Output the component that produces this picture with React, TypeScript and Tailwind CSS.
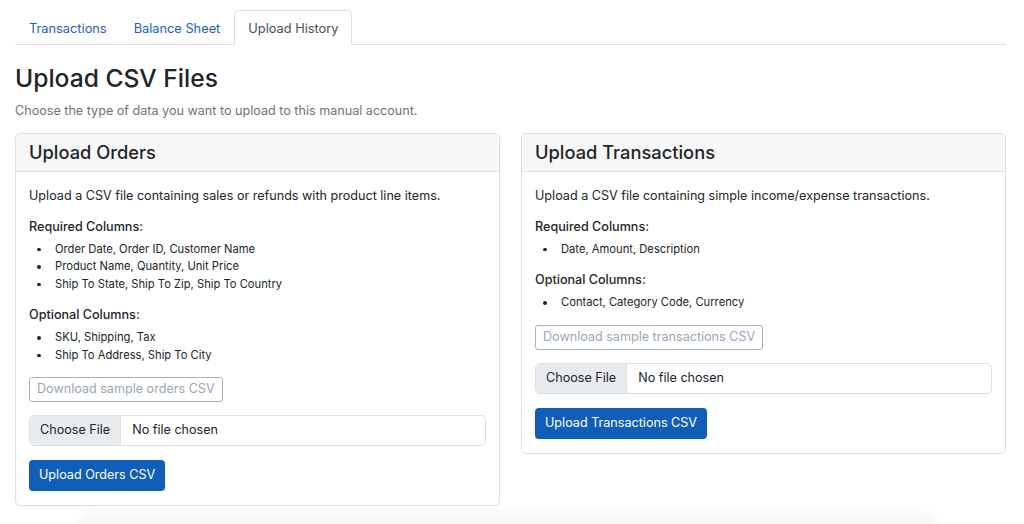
import React from 'react'

const tabs = ['Transactions', 'Balance Sheet', 'Upload History']

interface UploadCardProps {
  title: string
  description: string
  required: string[]
  optional: string[]
  sampleLabel: string
  uploadLabel: string
}

function ColumnList({ items }: { items: string[] }) {
  return (
    <ul className="mt-[6px] pl-[8px] text-[11.2px] text-[#212529] leading-[17.4px]">
      {items.map((r) => (
        <li key={r} className="flex items-center">
          <span className="w-[3.5px] h-[3.5px] rounded-full bg-[#212529] mr-[14.5px]" />
          {r}
        </li>
      ))}
    </ul>
  )
}

function UploadCard({ title, description, required, optional, sampleLabel, uploadLabel }: UploadCardProps) {
  return (
    <div className="rounded-[5px] border border-[#dcdfe3] bg-white">
      <div className="h-[38px] flex items-center px-[13px] bg-[#f7f7f7] border-b border-[#dcdfe3] rounded-t-[5px]">
        <h4 className="text-[18.3px] font-medium text-[#212529] leading-none">{title}</h4>
      </div>
      <div className="px-[13px] pt-[14px] pb-[14px]">
        <p className="text-[12.6px] text-[#212529] leading-[19px]">{description}</p>

        <h6 className="mt-[14px] text-[12.6px] font-medium text-[#212529] leading-[16px]">Required Columns:</h6>
        <ColumnList items={required} />

        <h6 className="mt-[14px] text-[12.6px] font-medium text-[#212529] leading-[16px]">Optional Columns:</h6>
        <ColumnList items={optional} />

        <button className="mt-[13px] h-[25px] px-[7px] rounded-[3px] border border-[#aab4c1] text-[12.6px] text-[#9aa6b4] leading-none">
          {sampleLabel}
        </button>

        <div className="mt-[13px] h-[31px] flex items-stretch rounded-[5px] border border-[#dcdfe3] overflow-hidden text-[12.6px] text-[#212529]">
          <span className="flex items-center px-[10px] bg-[#e9ecef] border-r border-[#dcdfe3]">Choose File</span>
          <span className="flex items-center px-[11px]">No file chosen</span>
        </div>

        <button className="mt-[14px] h-[31px] px-[10px] rounded-[4px] bg-[#115eb8] text-white text-[12.6px] leading-none">
          {uploadLabel}
        </button>
      </div>
    </div>
  )
}

export default function App() {
  return (
    <div
      className="relative w-[1024px] h-[524px] overflow-hidden bg-white"
      style={{ fontFamily: 'Inter, "Noto Sans", "Liberation Sans", sans-serif' }}
    >
      <div className="px-[15px] pt-[10px] pr-[18px]">
        <div className="flex border-b border-[#dcdfe3]">
          {tabs.map((t, i) => {
            const active = i === tabs.length - 1
            return (
              <div
                key={t}
                className={
                  active
                    ? 'ml-px -mb-px h-[35px] pt-[2px] px-[13px] flex items-center rounded-t-[5px] border border-[#dcdfe3] border-b-white bg-white text-[12.8px] text-[#495057]'
                    : 'ml-px h-[34px] pt-[3px] px-[13px] flex items-center text-[12.8px] text-[#1a62c0]'
                }
              >
                {t}
              </div>
            )
          })}
        </div>

        <h2 className="mt-[18px] text-[24.6px] font-medium text-[#212529] leading-[30px]">Upload CSV Files</h2>
        <p className="mt-[8px] text-[12.6px] text-[#6c757d] leading-[19px]">
          Choose the type of data you want to upload to this manual account.
        </p>

        <div className="mt-[13px] grid grid-cols-2 gap-[21px] items-start">
          <UploadCard
            title="Upload Orders"
            description="Upload a CSV file containing sales or refunds with product line items."
            required={[
              'Order Date, Order ID, Customer Name',
              'Product Name, Quantity, Unit Price',
              'Ship To State, Ship To Zip, Ship To Country',
            ]}
            optional={['SKU, Shipping, Tax', 'Ship To Address, Ship To City']}
            sampleLabel="Download sample orders CSV"
            uploadLabel="Upload Orders CSV"
          />
          <UploadCard
            title="Upload Transactions"
            description="Upload a CSV file containing simple income/expense transactions."
            required={['Date, Amount, Description']}
            optional={['Contact, Category Code, Currency']}
            sampleLabel="Download sample transactions CSV"
            uploadLabel="Upload Transactions CSV"
          />
        </div>
      </div>

      <div className="absolute left-[75px] right-[85px] top-[512px] h-[40px] rounded-[30px] bg-[#f0f1f3] blur-[4px] opacity-60" />
    </div>
  )
}
